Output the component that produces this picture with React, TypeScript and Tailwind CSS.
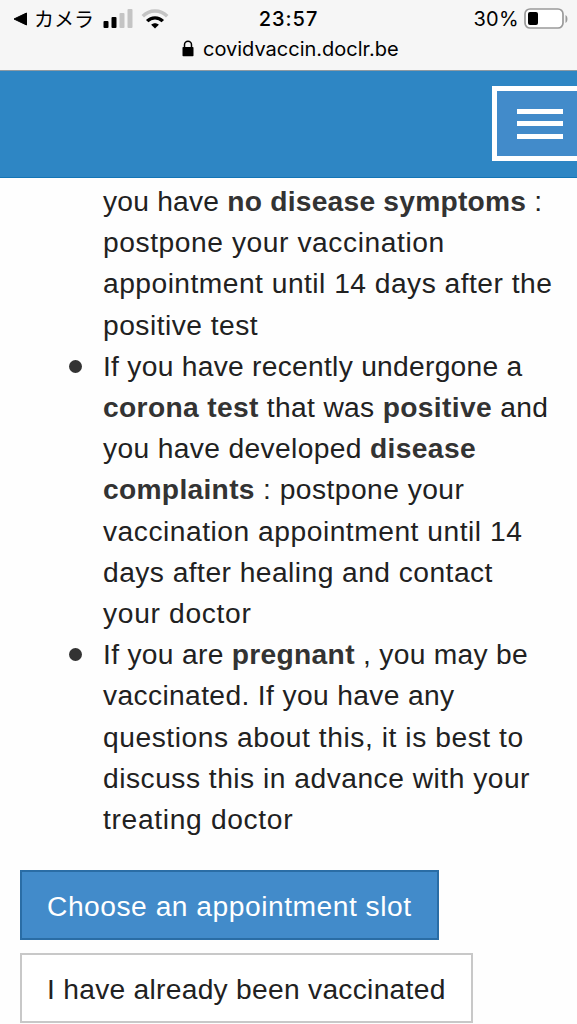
import type { ReactNode } from "react";

function Line({ children, className = "" }: { children: ReactNode; className?: string }) {
  return <span className={`block whitespace-nowrap ${className}`}>{children}</span>;
}

function Bullet() {
  return <span className="absolute top-[14px] -left-[34.5px] size-[13px] rounded-full bg-[#333]" />;
}

function StatusBar() {
  return (
    <div className="grid h-[37px] grid-cols-3 items-center text-black">
      <div className="flex items-center pl-[13px]">
        <svg viewBox="0 0 14 14" className="h-[14px] w-[14px]">
          <path d="M1 7 13.5 1v12z" fill="#000" stroke="#000" strokeWidth="1" strokeLinejoin="round" />
        </svg>
        <span className="ml-[7px] w-[62px] font-['Noto_Sans_CJK_JP',sans-serif] text-[20px] leading-[37px] whitespace-nowrap">
          カメラ
        </span>
        <svg viewBox="0 0 30 19" className="ml-[7px] h-[19px] w-[30px] shrink-0">
          <rect x="0.5" y="12" width="5" height="7" rx="1" fill="#000" />
          <rect x="8.5" y="8" width="5" height="11" rx="1" fill="#000" />
          <rect x="16.5" y="4" width="5" height="15" rx="1" fill="#c4c4c4" />
          <rect x="24.5" y="0" width="5" height="19" rx="1" fill="#c4c4c4" />
        </svg>
        <svg viewBox="0 0 28 20" className="ml-[8px] h-[20px] w-[28px] shrink-0" fill="none">
          <path d="M1.8 7.2C8.5.2 19.5.2 26.2 7.2" stroke="#c4c4c4" strokeWidth="3.4" />
          <path d="M6.2 12.2c4.3-4.5 11.3-4.5 15.6 0" stroke="#000" strokeWidth="3.4" />
          <path d="M10.2 15.8c2.1-2 5.5-2 7.6 0L14 19.6z" fill="#000" />
        </svg>
      </div>
      <span className="text-center font-[Inter,sans-serif] text-[20px] font-medium tracking-[1px]">23:57</span>
      <div className="flex items-center justify-end pr-[9px]">
        <span className="font-[Inter,sans-serif] text-[20px] tracking-[0.3px]">30%</span>
        <svg viewBox="0 0 44 22" className="ml-[5px] h-[22px] w-[44px] shrink-0">
          <rect x="1" y="1" width="38" height="19" rx="5" fill="#fff" stroke="#9a9a9a" strokeWidth="1.7" />
          <rect x="4" y="4" width="10" height="13" rx="2" fill="#000" />
          <path d="M41.5 7c2.6 1.2 2.6 6.8 0 8z" fill="#9a9a9a" />
        </svg>
      </div>
    </div>
  );
}

function AddressBar() {
  return (
    <div className="flex h-[23px] items-center pl-[182px] text-black">
      <svg viewBox="0 0 12 17" className="h-[17px] w-[12px] shrink-0">
        <path d="M2.5 8V4.8a3.5 3.5 0 0 1 7 0V8" fill="none" stroke="#000" strokeWidth="1.5" />
        <rect x="0.5" y="7" width="11" height="9.3" rx="0.8" fill="#000" />
      </svg>
      <span className="ml-[9px] font-[Inter,sans-serif] text-[20px]">covidvaccin.doclr.be</span>
    </div>
  );
}

export default function App() {
  return (
    <div className="flex h-[1024px] w-[577px] flex-col overflow-hidden bg-[#fefefe] font-['Liberation_Sans',Arial,sans-serif] text-[#212121]">
      <div className="h-[71px] shrink-0 border-b border-[#8d9aa3] bg-[#f6f6f6]">
        <StatusBar />
        <AddressBar />
      </div>

      <header className="flex h-[107px] shrink-0 justify-end border-b border-[#1475b5] bg-[#2e86c4] pt-[15px]">
        <button className="flex h-[75px] w-[85px] flex-col items-start gap-[7.4px] border-[5px] border-r-0 border-white bg-[#428bca] pt-[18px] pl-[20px]">
          <span className="h-[5px] w-[46px] bg-white" />
          <span className="h-[5px] w-[46px] bg-white" />
          <span className="h-[5px] w-[46px] bg-white" />
        </button>
      </header>

      <main className="flex flex-col items-start pt-[3px]">
        <ul className="pl-[103px] text-[28.2px] leading-[41.2px] [&_b]:font-bold [&_b]:text-[#333]">
          <li>
            <Line className="tracking-[0.23px]">you have <b>no disease symptoms</b> :</Line>
            <Line className="tracking-[0.57px]">postpone your vaccination</Line>
            <Line className="tracking-[0.48px]">appointment until 14 days after the</Line>
            <Line className="tracking-[0.48px]">positive test</Line>
          </li>
          <li className="relative">
            <Bullet />
            <Line className="tracking-[0.28px]">If you have recently undergone a</Line>
            <Line className="tracking-[0.34px]"><b>corona test</b> that was <b>positive</b> and</Line>
            <Line className="tracking-[0.36px]">you have developed <b>disease</b></Line>
            <Line className="tracking-[0.46px]"><b className="tracking-[0.3px]">complaints</b> : postpone your</Line>
            <Line className="tracking-[0.52px]">vaccination appointment until 14</Line>
            <Line className="tracking-[0.46px]">days after healing and contact</Line>
            <Line className="tracking-[0.68px]">your doctor</Line>
          </li>
          <li className="relative">
            <Bullet />
            <Line className="tracking-[0.31px]">If you are <b>pregnant</b> , you may be</Line>
            <Line className="tracking-[0.37px]">vaccinated. If you have any</Line>
            <Line className="tracking-[0.56px]">questions about this, it is best to</Line>
            <Line className="tracking-[0.5px]">discuss this in advance with your</Line>
            <Line className="tracking-[0.67px]">treating doctor</Line>
          </li>
        </ul>

        <div className="mt-[30px] ml-[20px] flex flex-col items-start gap-[13px] text-[28.2px]">
          <button className="h-[70px] w-[419px] border-2 border-[#2a6da5] bg-[#428bca] pt-[2px] pl-[25px] text-left tracking-[0.52px] whitespace-nowrap text-white">
            Choose an appointment slot
          </button>
          <button className="h-[70px] w-[453px] border-2 border-[#c8c8c8] bg-white pt-[2px] pl-[25px] text-left tracking-[0.28px] whitespace-nowrap">
            I have already been vaccinated
          </button>
        </div>
      </main>
    </div>
  );
}
